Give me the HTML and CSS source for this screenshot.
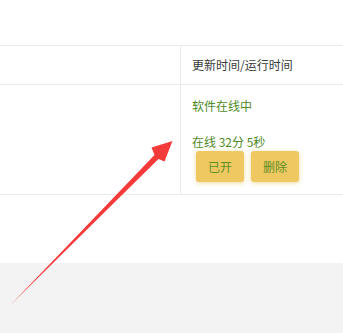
FILE: index.html
```
<!DOCTYPE html>
<html lang="zh-CN">
<head>
  <meta charset="UTF-8">
  <title>设备列表</title>
  <link rel="stylesheet" href="styles.css">
</head>
<body>
  <div class="panel">
    <div class="top-strip"></div>
    <div class="row head-row">
      <div class="cell cell-main"></div>
      <div class="cell cell-time">更新时间/运行时间</div>
    </div>
    <div class="row body-row">
      <div class="cell cell-main"></div>
      <div class="cell cell-time">
        <div class="status">软件在线中<br><br>在线 32分 5秒</div>
        <div class="actions">
          <button class="btn">已开</button>
          <button class="btn">删除</button>
        </div>
      </div>
    </div>
    <div class="spacer"></div>
  </div>
  <div class="footer-bg"></div>

  <svg class="arrow" width="343" height="333" viewBox="0 0 343 333">
    <polygon points="10,305.5 154.5,155 151.5,147.5 172.5,141 164.5,161.5 158.5,159" fill="#f53a3a"/>
  </svg>
</body>
</html>
```

FILE: styles.css
```
body {
  margin: 0;
  padding: 0;
  font-family: "Noto Sans CJK SC", "Noto Sans", sans-serif;
  font-size: 12px;
  color: #333;
  background-color: #f3f3f3;
  width: 343px;
  height: 333px;
  overflow: hidden;
  position: relative;
}

.panel {
  background-color: #fff;
}

.top-strip {
  height: 45px;
  border-bottom: 1px solid #e8eaec;
}

.row {
  display: flex;
  border-bottom: 1px solid #e8eaec;
}

.cell-main {
  width: 180px;
  border-right: 1px solid #e8eaec;
}

.cell-time {
  flex: 1;
  padding-left: 11px;
}

.head-row {
  height: 38px;
}

.head-row .cell-time {
  line-height: 38px;
  color: #3a3a3a;
}

.body-row {
  height: 109px;
}

.body-row .cell-time {
  padding-top: 12px;
}

.status {
  line-height: 18px;
  color: #4f8a28;
}

.actions {
  display: flex;
  gap: 7px;
  margin-left: 4px;
}

.btn {
  width: 48px;
  height: 31px;
  border: none;
  border-radius: 3px;
  background-color: #f0c862;
  color: #5e8f22;
  font-family: inherit;
  font-size: 12px;
  padding: 0;
  box-shadow: 0 1px 5px rgba(230, 190, 80, 0.55);
}

.spacer {
  height: 68px;
}

.arrow {
  position: absolute;
  left: 0;
  top: 0;
}
```
